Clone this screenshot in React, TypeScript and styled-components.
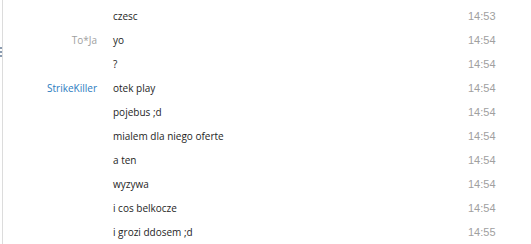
import React from "react";
import styled, { createGlobalStyle } from "styled-components";

const Global = createGlobalStyle`
  html, body { margin: 0; padding: 0; background: #ffffff; }
  body { font-family: "Open Sans", "Lato", sans-serif; }
`;

const Pane = styled.div`
  width: 531px;
  height: 244px;
  display: flex;
  background: #ffffff;
  overflow: hidden;
`;

const Splitter = styled.div`
  width: 2px;
  display: flex;
  flex-direction: column;
  justify-content: flex-start;
  padding-top: 47px;
  gap: 2px;
  border-right: 1px solid #dcdcdc;
`;

const Grip = styled.span`
  display: block;
  width: 2px;
  height: 2px;
  background: #8a9bb0;
`;

const List = styled.div`
  flex: 1;
  display: flex;
  flex-direction: column;
  padding-top: 4px;
`;

const Row = styled.div`
  height: 24px;
  display: grid;
  grid-template-columns: 94px 339px 40px;
  column-gap: 16px;
  align-items: center;
  font-size: 10px;
`;

const Name = styled.span<{ $self?: boolean }>`
  text-align: right;
  color: ${(p) => (p.$self ? "#a0a0a0" : "#2b7bc0")};
  white-space: nowrap;
`;

const Text = styled.span`
  color: #1e1e1e;
  white-space: nowrap;
`;

const Time = styled.span`
  color: #a0a0a0;
  font-family: "Liberation Sans", sans-serif;
  font-size: 11px;
`;

type Msg = { name?: string; self?: boolean; text: string; time: string };

const messages: Msg[] = [
  { text: "czesc", time: "14:53" },
  { name: "To*Ja", self: true, text: "yo", time: "14:54" },
  { text: "?", time: "14:54" },
  { name: "StrikeKiller", text: "otek play", time: "14:54" },
  { text: "pojebus ;d", time: "14:54" },
  { text: "mialem dla niego oferte", time: "14:54" },
  { text: "a ten", time: "14:54" },
  { text: "wyzywa", time: "14:54" },
  { text: "i cos belkocze", time: "14:54" },
  { text: "i grozi ddosem ;d", time: "14:55" },
];

export default function App() {
  return (
    <Pane>
      <Global />
      <Splitter>
        <Grip />
        <Grip />
        <Grip />
      </Splitter>
      <List>
        {messages.map((m, i) => (
          <Row key={i}>
            <Name $self={m.self}>{m.name ?? ""}</Name>
            <Text>{m.text}</Text>
            <Time>{m.time}</Time>
          </Row>
        ))}
      </List>
    </Pane>
  );
}
